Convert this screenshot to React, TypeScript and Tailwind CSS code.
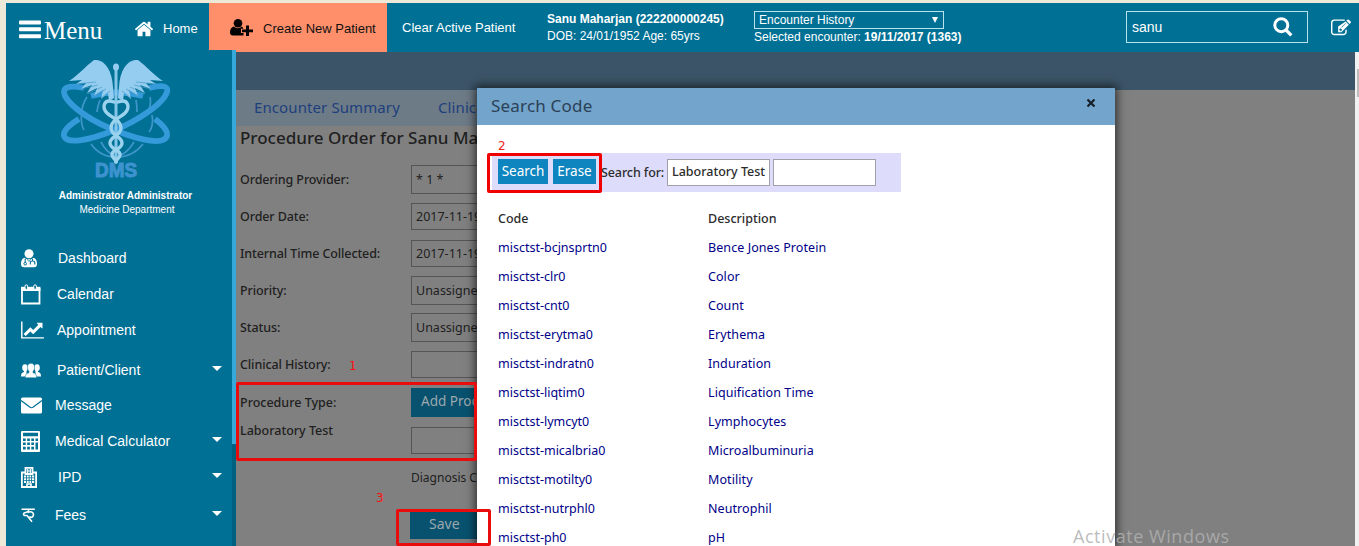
import React from "react";

type GlyphProps = { d: string; w: number; h: number; box: string };
const Glyph = ({ d, w, h, box }: GlyphProps) => (
  <svg width={w} height={h} viewBox={box} fill="currentColor" className="shrink-0"><path d={d} /></svg>
);

const HOME = "M1472 992v480q0 26-19 45t-45 19h-384v-384H768v384H384q-26 0-45-19t-19-45V992q0-1 .5-3t.5-3l575-474 575 474q1 2 1 6zm223-69l-62 74q-8 9-21 11h-3q-13 0-21-7L896 424l-692 577q-12 8-24 7-13-2-21-11l-62-74q-8-10-7-23.5t11-21.5l719-599q32-26 76-26t76 26l244 204V288q0-14 9-23t23-9h192q14 0 23 9t9 23v408l219 182q10 8 11 21.5t-7 23.5z";
const CHART = "M2048 1536v128H0V128h128v1408h1920zM1920 288v435q0 21-19.5 29.5T1865 745l-121-121-633 633q-10 10-23 10t-23-10l-233-233-416 416-192-192 585-585q10-10 23-10t23 10l233 233 464-464-121-121q-16-16-7.500-35.5T1453 256h435q14 0 23 9t9 23z";
const EDIT = "M888 1184l116-116-152-152-116 116v56h96v96h56zm440-720q-16-16-33 1L945 815q-17 17-1 33t33-1l350-350q17-17 1-33zm80 594v190q0 119-84.5 203.5T1120 1536H288q-119 0-203.5-84.5T0 1248V416q0-119 84.5-203.5T288 128h832q63 0 117 25 15 7 18 23 3 17-9 29l-49 49q-14 14-32 8-23-6-45-6H288q-66 0-113 47t-47 113v832q0 66 47 113t113 47h832q66 0 113-47t47-113v-126q0-13 9-22l64-64q15-15 35-7t20 29zm-96-738l288 288-672 672H640V768zm444 132l-92 92-288-288 92-92q28-28 68-28t68 28l152 152q28 28 28 68t-28 68z";

const MenuIcon = () => (
  <svg width="22" height="19" viewBox="0 0 22 19" fill="white" className="shrink-0">
    <rect y="0.500" width="22" height="4" rx="1" /><rect y="7.300" width="22" height="4" rx="1" /><rect y="14.200" width="22" height="4" rx="1" />
  </svg>
);

const UserPlusIcon = () => (
  <svg width="23" height="17" viewBox="0 0 23 17" fill="black" className="shrink-0">
    <circle cx="8" cy="4.300" r="4.300" />
    <path d="M4 7.500C1.300 8 0 10.500 0 13.500 0 15.500 1 16.500 3 16.500h10.500V14H11V9.700h2.300C12.800 8.400 12.500 7.800 11.800 7.500 9.500 9.700 6.300 9.700 4 7.500z" />
    <path d="M16 6.500h3v4h4v2.800h-4v3.700h-3v-3.700h-4v-2.800h4z" />
  </svg>
);

const SearchIcon = () => (
  <svg width="20" height="20" viewBox="0 0 20 20" fill="none" stroke="white" className="shrink-0">
    <circle cx="8.300" cy="8.200" r="6.500" strokeWidth="3" /><path d="M13 13l5.300 5.300" strokeWidth="3.300" />
  </svg>
);

const DoctorIcon = () => (
  <svg width="16" height="19" viewBox="0 0 16 19">
    <circle cx="8" cy="4.800" r="4.500" fill="white" />
    <path d="M3.500 8.800C1 9.500 0 12 0 15c0 2.300 1 3.300 3 3.300h10c2 0 3-1 3-3.300 0-3-1-5.500-3.500-6.200-2.500 2-6.500 2-9 0z" fill="white" />
    <path d="M4.200 9.800v4M11.500 9.800v2M9.300 15.500v-1.700c0-2.400 4.500-2.400 4.500 0v1.700" stroke="#007095" strokeWidth="1.100" fill="none" />
    <circle cx="4.200" cy="14.700" r="1.300" fill="none" stroke="#007095" />
    <path d="M6.200 10.300L8 12.500l1.800-2.200" stroke="#007095" strokeWidth=".8" fill="none" />
  </svg>
);

const CalendarIcon = () => (
  <svg width="20" height="21" viewBox="0 0 20 21" fill="none" stroke="white">
    <path d="M1 5v14.500h17.500V4" strokeWidth="1.800" />
    <path d="M0 2.800h19.400V7H0z" fill="white" stroke="none" />
    <rect x="4" y=".8" width="2.600" height="4.600" rx="1.300" fill="#007095" />
    <rect x="12.800" y=".8" width="2.600" height="4.600" rx="1.300" fill="#007095" />
  </svg>
);

const UsersIcon = () => (
  <svg width="20" height="15" viewBox="0 0 20 15" fill="white">
    <ellipse cx="4" cy="4.700" rx="2.800" ry="3.400" /><ellipse cx="16" cy="4.700" rx="2.800" ry="3.400" />
    <path d="M0 13.500c0-3 1-4 3-4.500V7h2.500v6.500zM20 13.500c0-3-1-4-3-4.500V7h-2.500v6.500z" />
    <path d="M4.300 14.800c0-3.300 1-4.300 3.700-5V8.500C5.500 5.500 6 .3 10 .3s4.500 5.200 2 8.200v1.300c2.700.7 3.700 1.700 3.700 5z" stroke="#007095" strokeWidth=".5" />
  </svg>
);

const MailIcon = () => (
  <svg width="21" height="17" viewBox="0 0 21 17">
    <rect y=".5" width="21" height="16" rx="1.500" fill="white" />
    <path d="M0 3.500l8.700 6.600q1.800 1.300 3.600 0L21 3.500" fill="none" stroke="#007095" strokeWidth="1.200" />
  </svg>
);

const CalculatorIcon = () => (
  <svg width="19" height="21" viewBox="0 0 19 21">
    <rect width="19" height="21" rx="1" fill="white" />
    <path d="M2 1.800h15v3.500H2zM2 7.500h2.700v2.500H2zM6.200 7.500h2.700v2.500H6.200zM10.300 7.500H13v2.500h-2.700zM14.500 7.500h2.500v2.500h-2.500zM2 11.600h2.700v2.500H2zM6.200 11.600h2.700v2.500H6.200zM10.300 11.600H13v2.500h-2.700zM14.500 11.600h2.500v6.900h-2.500zM2 15.800h2.700v2.700H2zM6.200 15.800h2.700v2.700H6.200zM10.300 15.800H13v2.700h-2.700z" fill="#007095" />
  </svg>
);

const HospitalIcon = () => (
  <svg width="16" height="21" viewBox="0 0 16 21" fill="none" stroke="white">
    <path d="M4.500 5.500H.9v14.500h14.200V5.500h-3.600M4.500 7V.9h7V7z" strokeWidth="1.800" />
    <path d="M6.700 2v4M9.300 2v4M6.700 4h2.600" strokeWidth="1.200" />
    <path d="M3 9.500h2.200M6 9.500h1.700M8.500 9.500h1.700M11 9.500h2.200M3 12.300h2.200M6 12.300h1.700M8.500 12.300h1.700M11 12.300h2.200M3 15h2.200M6 15h1.700M8.500 15h1.700M11 15h2.200" strokeWidth="1.900" />
    <path d="M6 20v-3h4v3" strokeWidth="1.600" />
  </svg>
);

const RupeeIcon = () => (
  <svg width="14" height="15" viewBox="0 0 14 15" fill="none" stroke="white" strokeWidth="1.600">
    <path d="M.5 1.200h13.300M7.500 1.500v1.300C7.500 5 2.500 3.500 2.500 6.200c0 1.300 1.800 1.500 3.500 1.300l5 6.200" />
    <path d="M6.500 4.500c3-1.500 6-.5 6 2 0 2.300-2 3.700-4.300 2.300" />
  </svg>
);

const Logo = () => (
  <svg width="112" height="122" viewBox="0 0 112 122" fill="none">
    <g stroke="#3f96cb" strokeWidth="1.700">
      <path d="M27 37C20 47 20 63 24 70M40 40c-2 6-3 9-3 12M76 40c1 5 1 9 1 12M90 37c2 8-1 12-3 17M92 55c2 8-1 15-3 17M31 84c12 17 38 18 52 0M41 82c4 8 9 12 14 14M74 82c-5 8-9 12-15 14" />
    </g>
    <g stroke="#349ada" strokeWidth="5.800">
      <path d="M24 28C9 25 1 27 5 36c6 11 27 26 52 35 25 10 47 14 50 5 1-5-4-11-12-17" />
      <path d="M89 28c11-3 20-3 18 4-3 11-28 28-52 38C30 80 7 85 4 76c-1-5 5-11 15-17" />
      <path d="M31 36c18-5 33-5 52 0" />
    </g>
    <g fill="#94cdef">
      <path d="M53 27C52 9 44 -1 34 0c-8 6-17 16-25 21l13-1-6 4 10-1-5 6 11-4-5 8 10-5-3 8 9-6-2 9 7-6 1 8 5-3z" />
      <path d="M59 27C60 9 68 -1 78 0c8 6 17 16 25 21l-13-1 6 4-10-1 5 6-11-4 5 8-10-5 3 8-9-6 2 9-7-6-1 8-5-3z" />
    </g>
    <g stroke="#4a9cc6" strokeWidth=".7">
      <path d="M36 22L16 24M38 25L21 29M42 27L27 34M46 29L33 36M50 31L41 38M76 22l20 2M74 25l17 4M70 27l15 7M66 29l13 7M62 31l9 7" />
    </g>
    <path d="M56 7v96" stroke="#83c6e9" strokeWidth="3" />
    <ellipse cx="56" cy="7" rx="3" ry="3.600" fill="#94cdef" />
    <g stroke="#9bd3ef" strokeWidth="3.400" strokeLinecap="round">
      <path d="M54 42c-11-4-12 6-7 11 5 5 14 7 14 15s-11 8-11 15 11 6 10 12c0 3-4 4-4 7" />
      <path d="M58 42c11-4 12 6 7 11-5 5-14 7-14 15s11 8 11 15-11 6-10 12c0 3 4 4 4 7" />
    </g>
    <text x="35" y="117" fill="#3d93cf" fontFamily="Liberation Sans" fontSize="20" fontWeight="700" stroke="#3d93cf" strokeWidth="1" textLength="42" lengthAdjust="spacingAndGlyphs">DMS</text>
  </svg>
);

const Caret = () => <span className="-mt-1 mr-[10px] ml-auto border-x-[5px] border-t-[5px] border-x-transparent border-t-white" />;

const nav = [
  { h: "h-9", icon: <DoctorIcon />, label: "Dashboard", gap: "w-[37px]", caret: false },
  { h: "h-9", icon: <CalendarIcon />, label: "Calendar", gap: "w-[36px]", caret: false },
  { h: "h-9", icon: <Glyph d={CHART} w={23} h={20} box="0 0 2048 1792" />, label: "Appointment", gap: "w-[36px]", caret: false },
  { h: "h-[41px] pt-[3px]", icon: <UsersIcon />, label: "Patient/Client", gap: "w-[36px]", caret: true },
  { h: "h-[33px]", icon: <MailIcon />, label: "Message", gap: "w-[34px]", caret: false },
  { h: "h-[39px]", icon: <CalculatorIcon />, label: "Medical Calculator", gap: "w-[34px]", caret: true },
  { h: "h-[33px]", icon: <HospitalIcon />, label: "IPD", gap: "w-[37px]", caret: true },
  { h: "h-[43px]", icon: <RupeeIcon />, label: "Fees", gap: "w-[34px]", caret: true },
];

const fields = [
  { label: "Ordering Provider:", value: "* 1 *", box: "h-[29px]" },
  { label: "Order Date:", value: "2017-11-19", box: "h-[27px]" },
  { label: "Internal Time Collected:", value: "2017-11-19", box: "h-[27px]" },
  { label: "Priority:", value: "Unassigned", box: "h-[29px]" },
  { label: "Status:", value: "Unassigned", box: "h-[29px]" },
  { label: "Clinical History:", value: "", box: "h-[27px]" },
];

const codes = [
  ["misctst-bcjnsprtn0", "Bence Jones Protein"],
  ["misctst-clr0", "Color"],
  ["misctst-cnt0", "Count"],
  ["misctst-erytma0", "Erythema"],
  ["misctst-indratn0", "Induration"],
  ["misctst-liqtim0", "Liquification Time"],
  ["misctst-lymcyt0", "Lymphocytes"],
  ["misctst-micalbria0", "Microalbuminuria"],
  ["misctst-motilty0", "Motility"],
  ["misctst-nutrphl0", "Neutrophil"],
  ["misctst-ph0", "pH"],
];

function Header() {
  return (
    <header className="flex h-[49px] shrink-0 items-stretch bg-[#007095] text-white">
      <div className="flex w-[128px] items-center pt-1 pl-[13px]">
        <MenuIcon />
        <span className="ml-[3px] pt-0.5 font-['Liberation_Serif',serif] text-[25px] leading-none">Menu</span>
      </div>
      <div className="flex w-[75px] items-center pt-0.5 text-[13px]">
        <Glyph d={HOME} w={20} h={20} box="0 0 1792 1792" />
        <span className="ml-[9px]">Home</span>
      </div>
      <div className="flex w-[178px] items-center bg-[#ff8f6b] pl-[21px] text-[13px] text-[#111]">
        <UserPlusIcon />
        <span className="ml-[10px] pt-0.5 whitespace-nowrap">Create New Patient</span>
      </div>
      <div className="flex w-[160px] items-center pl-[15px] text-[13px]">Clear Active Patient</div>
      <div className="w-[207px] pt-[8px] text-[12px] leading-[17px] whitespace-nowrap">
        <p className="font-bold">Sanu Maharjan (222200000245)</p>
        <p>DOB: 24/01/1952 Age: 65yrs</p>
      </div>
      <div className="w-[372px] pt-[8px] text-[12px] whitespace-nowrap">
        <div className="flex h-[18px] w-[190px] items-center justify-between border border-[#b9e2ef] pr-[5px] pl-[4px]">
          <span>Encounter History</span>
          <span className="border-x-[3px] border-t-[6px] border-x-transparent border-t-white" />
        </div>
        <p className="leading-[17px]">Selected encounter: <b>19/11/2017 (1363)</b></p>
      </div>
      <div className="mt-[8px] flex h-8 w-[182px] items-center justify-between border border-[#b9e2ef] pr-[14px] pl-[5px] text-[14px]">
        <span>sanu</span>
        <SearchIcon />
      </div>
      <div className="flex items-center pl-[23px]"><Glyph d={EDIT} w={20} h={20} box="0 0 1792 1792" /></div>
    </header>
  );
}

function Sidebar() {
  return (
    <aside className="relative -mt-[2px] flex w-[230px] shrink-0 bg-[#007095] text-white">
      <div className="w-[226px]">
        <div className="flex h-[132px] justify-center pt-[10px] pr-[7px]"><Logo /></div>
        <div className="pt-[7px] pl-[13px] text-center text-[10px] leading-[14px]">
          <p className="font-bold">Administrator Administrator</p>
          <p className="pl-[3px]">Medicine Department</p>
        </div>
        <nav className="mt-[23px] text-[14px]">
          {nav.map((n) => (
            <div key={n.label} className={"flex items-center pl-[15px] " + n.h}>
              <span className={"flex shrink-0 " + n.gap}>{n.icon}</span>
              <span>{n.label}</span>
              {n.caret && <Caret />}
            </div>
          ))}
        </nav>
      </div>
      <div className="w-1 bg-[#006080]"><div className="h-[394px] bg-[#35a9d9]" /></div>
    </aside>
  );
}

function OrderForm() {
  return (
    <main className="min-w-0 flex-1 bg-[#808080] font-['Noto_Sans',sans-serif] text-[#202020]">
      <div className="h-[38px] bg-[#3b5467]" />
      <div className="flex h-9 w-[600px] items-center bg-[#6d7b87] pb-[2px] pl-[18px] text-[15px] tracking-[0.1px] text-[#1e3f7d]">
        <span className="w-[184px]">Encounter Summary</span>
        <span>Clinical</span>
      </div>
      <h1 className="pl-1 text-[17px] leading-[24px] font-medium whitespace-nowrap">Procedure Order for Sanu Maharjan</h1>
      <div className="mt-[11px] pl-1 text-[12.5px]">
        {fields.map((f) => (
          <div key={f.label} className="flex h-[37px] items-center">
            <span className="w-[171px] pt-0.5 font-medium tracking-[-0.1px]">{f.label}</span>
            <span className={"flex w-[180px] items-center border border-[#555] pt-px pl-[4px] text-[12.5px] " + f.box}>{f.value}</span>
          </div>
        ))}
        <div className="mt-[1px] flex h-[37px] items-center">
          <span className="w-[171px] pt-0.5 font-medium">Procedure Type:</span>
          <span className="flex h-[29px] w-[150px] items-center bg-[#08526f] pb-0.5 pl-[10px] text-[13.5px] text-[#9ca8ae]">Add Procedure</span>
        </div>
        <div className="flex h-[39px] items-end">
          <span className="w-[171px] self-start pt-px font-medium">Laboratory Test</span>
          <span className="mb-[6px] h-[27px] w-[180px] border border-[#555]" />
        </div>
        <div className="mt-[9px] pl-[171px] text-[12px]">Diagnosis Codes</div>
        <div className="mt-[23px] ml-[170px] flex h-[29px] w-[120px] items-center bg-[#08526f] pb-[3px] pl-[19px] text-[14px] text-[#9ca8ae]">Save</div>
      </div>
    </main>
  );
}

function SearchDialog() {
  return (
    <section className="absolute top-[88px] left-[477px] h-[458px] w-[638px] bg-white font-['Noto_Sans',sans-serif] shadow-[0_0_9px_2px_rgba(0,0,0,0.65)]">
      <div className="flex h-[37px] items-center justify-between bg-[#73a4cc] pr-[19px] pb-0.5 pl-[14px] text-[17px] tracking-[0.2px] text-[#2b4156]">
        <span>Search Code</span>
        <svg width="10" height="10" viewBox="0 0 10 10" className="-mt-[6px]"><path d="M1.500 1.500l7 7M8.500 1.500l-7 7" stroke="#17202a" strokeWidth="2.200" /></svg>
      </div>
      <div className="mt-[28px] ml-[15px] flex h-[39px] w-[409px] items-start bg-[#ddddfb] pt-[6px] pl-[6px] whitespace-nowrap">
        <button className="h-[25px] w-[50px] bg-[#0f85bf] pb-px text-[13.5px] text-white">Search</button>
        <button className="ml-[5px] h-[25px] w-[43px] bg-[#0f85bf] pb-px text-[13.5px] text-white">Erase</button>
        <span className="ml-[5px] w-[66px] text-[12.5px] leading-[27px] font-medium tracking-[-0.1px] text-[#2c2c2c]">Search for:</span>
        <span className="flex h-[27px] w-[103px] items-center border border-[#a0a0a8] bg-white pl-[4px] text-[12.5px] font-medium text-[#2c2c2c]">Laboratory Test</span>
        <span className="ml-[3px] h-[27px] w-[103px] border border-[#a0a0a8] bg-white" />
      </div>
      <div className="mt-[12px] grid grid-cols-[210px_1fr] pl-[21px] text-[12.5px] leading-[29px] text-[#000088]">
        <span className="font-medium text-[#2c2c2c]">Code</span>
        <span className="font-medium text-[#2c2c2c]">Description</span>
        {codes.map(([c, d]) => (
          <React.Fragment key={c}>
            <span>{c}</span>
            <span className="tracking-[0.08px]">{d}</span>
          </React.Fragment>
        ))}
      </div>
    </section>
  );
}

export default function App() {
  return (
    <div className="relative flex h-[546px] w-[1359px] flex-col overflow-hidden bg-[#ece9d8] pt-[3px] pl-[6px] font-['Liberation_Sans',sans-serif]">
      <Header />
      <div className="flex min-h-0 flex-1">
        <Sidebar />
        <OrderForm />
        <div className="w-1 bg-[#f1f1f1] pt-[17px]"><div className="ml-[2px] h-[28px] bg-[#bcbcbc]" /></div>
      </div>
      <SearchDialog />
      <div className="absolute top-[382px] left-[236px] h-[79px] w-[241px] rounded-[2px] border-3 border-[#e80c0c]" />
      <div className="absolute top-[509px] left-[396px] h-[37px] w-[95px] rounded-[2px] border-3 border-[#e80c0c]" />
      <div className="absolute top-[153px] left-[487px] h-[40px] w-[115px] rounded-[2px] border-3 border-[#f00000]" />
      <span className="absolute top-[358px] left-[349px] font-['DejaVu_Sans',sans-serif] text-[12px] leading-[17px] text-[#ff1010]">1</span>
      <span className="absolute top-[138px] left-[498px] font-['DejaVu_Sans',sans-serif] text-[12px] leading-[17px] text-[#ee1c1c]">2</span>
      <span className="absolute top-[490px] left-[376px] font-['DejaVu_Sans',sans-serif] text-[12px] leading-[17px] text-[#ff1010]">3</span>
      <span className="absolute top-[524px] left-[1073px] font-['Open_Sans',sans-serif] text-[18px] leading-[25px] tracking-[0.55px] whitespace-nowrap text-[#b0b0b0]/85">Activate Windows</span>
    </div>
  );
}
